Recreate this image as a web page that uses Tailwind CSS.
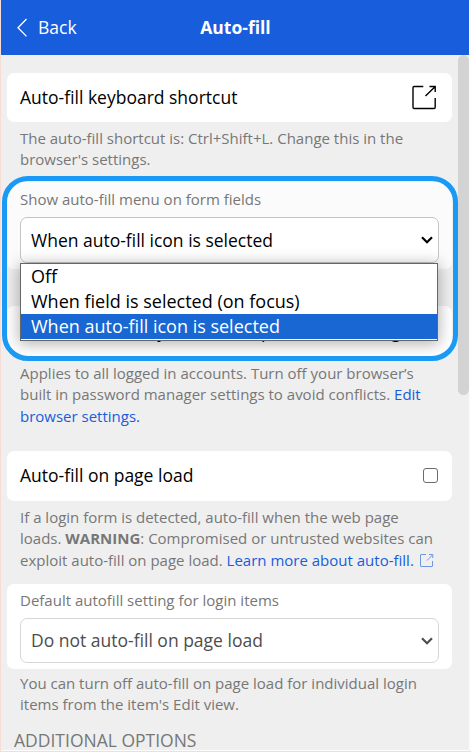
<!DOCTYPE html>
<html lang="en">
<head>
<meta charset="utf-8">
<title>Auto-fill</title>
<script src="https://cdn.jsdelivr.net/npm/@tailwindcss/browser@4"></script>
</head>
<body class="h-[752px] w-[471px] overflow-hidden bg-[#fdfbfc] font-['Open_Sans',sans-serif] text-[17.5px] leading-[25px] text-black">
<div class="relative flex h-[752px] w-[471px] flex-col overflow-hidden border-b border-l border-[#f5ddd5]">
  <header class="grid h-[55px] w-[468px] shrink-0 grid-cols-3 items-center bg-[#175ddc] text-white">
    <div class="flex items-center pl-[16px]">
      <svg class="mr-[11px] h-[20px] w-[10px]" viewBox="0 0 10 20" fill="none" stroke="currentColor" stroke-width="1.3"><path d="M9.5 1 1 9.7 9.5 18.4"/></svg>
      <span>Back</span>
    </div>
    <h1 class="pl-[1px] text-center font-bold">Auto-fill</h1>
  </header>

  <div class="flex h-[695px] w-[468px] bg-[#efefef]">
    <main class="flex w-[457px] shrink-0 flex-col pt-[18px] pl-[6px] whitespace-nowrap">
      <section class="flex h-[49px] w-[445px] shrink-0 items-center justify-between rounded-[7px] bg-white pr-[15px] pl-[13px]">
        <span>Auto-fill keyboard shortcut</span>
        <svg class="h-[26px] w-[26px]" viewBox="0 0 26 26" fill="none" stroke="currentColor" stroke-width="1.4"><path d="M12.3 1.500H3.200A1.200 1.200 0 0 0 2 2.700V22.300A1.200 1.200 0 0 0 3.200 23.500H23A1.200 1.200 0 0 0 24.200 22.300V13M14.500 11 24 1.700M18.500 1.500H24.200V7"/></svg>
      </section>
      <p class="h-[54px] shrink-0 pt-[6px] pl-[13px] text-[15px] leading-[21.43px] text-[#777]">The auto-fill shortcut is: Ctrl+Shift+L. Change this in the<br>browser's settings.</p>

      <section class="mt-[6px] h-[87px] w-[445px] shrink-0 rounded-[7px] bg-[#fbfbfb] px-[13px] pt-[7px]">
        <p class="text-[15px] leading-[21px] text-[#777]">Show auto-fill menu on form fields</p>
        <div class="relative mt-[7px] h-[46px] w-[419px]">
          <div class="flex h-[46px] items-center justify-between rounded-[7px] border border-[#c4c4c4] bg-white pr-[5px] pl-[10px]">
            <span>When auto-fill icon is selected</span>
            <svg class="h-[8px] w-[12px]" viewBox="0 0 12 8" fill="none" stroke="currentColor" stroke-width="2.200"><path d="M1 1.200 6 6.200 11 1.200"/></svg>
          </div>
          <ul class="absolute top-[46px] left-0 z-10 h-[78px] w-[418px] border border-[#666] bg-white text-[18px] leading-[25px] shadow-[0_2px_14px_1px_rgba(0,0,0,0.3)]">
            <li class="pl-[10px]">Off</li>
            <li class="pl-[10px]">When field is selected (on focus)</li>
            <li class="bg-[#1967d2] pl-[10px] text-white">When auto-fill icon is selected</li>
          </ul>
        </div>
      </section>

      <section class="mt-[37px] flex h-[50px] w-[445px] shrink-0 items-center rounded-[7px] bg-white pl-[13px]">
        <span>Make Bitwarden your default password manager</span>
      </section>
      <p class="h-[95px] shrink-0 pt-[7px] pl-[13px] text-[15px] leading-[21.43px] text-[#777]">Applies to all logged in accounts. Turn off your browser’s<br>built in password manager settings to avoid conflicts. <a class="text-[#175ddc]">Edit<br>browser settings.</a></p>

      <section class="flex h-[50px] w-[445px] shrink-0 items-center justify-between rounded-[7px] bg-white pr-[14px] pb-[2px] pl-[13px]">
        <span>Auto-fill on page load</span>
        <span class="h-[15px] w-[15px] rounded-[3px] border border-[#6b6b6b] bg-white"></span>
      </section>
      <p class="h-[83px] shrink-0 pt-[6px] pl-[13px] text-[15px] leading-[21.43px] text-[#777]">If a login form is detected, auto-fill when the web page<br>loads. <b>WARNING</b>: Compromised or untrusted websites can<br>exploit auto-fill on page load. <a class="text-[#175ddc]">Learn more about auto-fill. <svg class="ml-[1px] inline-block h-[15px] w-[15px] align-[-2px] opacity-60" viewBox="0 0 15 15" fill="none" stroke="currentColor" stroke-width="1"><path d="M7 1.500H2Q1.500 1.500 1.500 2V13Q1.500 13.500 2 13.500H13Q13.500 13.500 13.500 13V8M8 7.500 13.500 2M10 1.500H13.800V5"/></svg></a></p>

      <section class="h-[85px] w-[445px] shrink-0 rounded-[7px] bg-white px-[13px] pt-[6px]">
        <p class="text-[15px] leading-[21px] text-[#777]">Default autofill setting for login items</p>
        <div class="mt-[7px] flex h-[45px] w-[419px] items-center justify-between rounded-[7px] border border-[#d6d6d6] pr-[5px] pl-[10px] text-[#4d4d4d]">
          <span>Do not auto-fill on page load</span>
          <svg class="h-[8px] w-[12px]" viewBox="0 0 12 8" fill="none" stroke="currentColor" stroke-width="2.200"><path d="M1 1.200 6 6.200 11 1.200"/></svg>
        </div>
      </section>
      <p class="h-[59px] shrink-0 pt-[4px] pl-[13px] text-[15px] leading-[21.43px] text-[#777]">You can turn off auto-fill on page load for individual login<br>items from the item's Edit view.</p>
      <h2 class="pl-[7px] text-[#777]">ADDITIONAL OPTIONS</h2>
    </main>
    <div class="h-[340px] w-[11px] rounded-[6px] bg-[#d3d3d3]"></div>
  </div>
  <div class="absolute top-[176px] left-[1px] z-20 h-[185px] w-[456px] rounded-[26px] border-[5px] border-[#1a9af5]"></div>
</div>
</body>
</html>
